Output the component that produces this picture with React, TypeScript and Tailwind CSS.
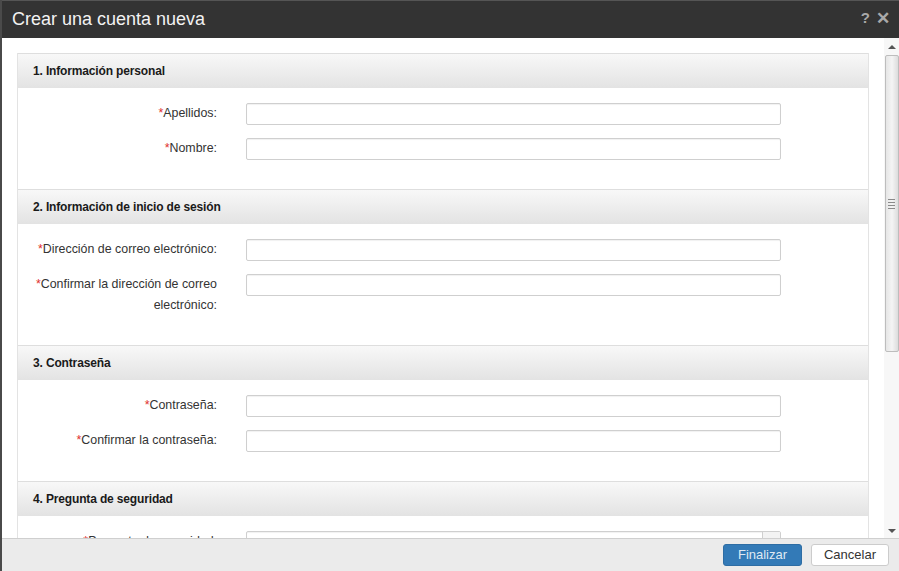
import React from "react";

type Field = { label: string; select?: boolean };
type Section = { title: string; fields: Field[] };

const sections: Section[] = [
  {
    title: "1. Información personal",
    fields: [{ label: "Apellidos:" }, { label: "Nombre:" }],
  },
  {
    title: "2. Información de inicio de sesión",
    fields: [
      { label: "Dirección de correo electrónico:" },
      { label: "Confirmar la dirección de correo electrónico:" },
    ],
  },
  {
    title: "3. Contraseña",
    fields: [{ label: "Contraseña:" }, { label: "Confirmar la contraseña:" }],
  },
  {
    title: "4. Pregunta de seguridad",
    fields: [{ label: "Pregunta de seguridad:", select: true }, { label: "Respuesta:" }],
  },
];

function FormRow({ field }: { field: Field }) {
  return (
    <div className="flex items-start gap-[29px]">
      <label className="w-[199px] shrink-0 pl-[14px] text-right text-[12.4px] leading-[21px] text-[#333]">
        <span className="text-[#e0322f]">*</span>
        {field.label}
      </label>
      <div className="relative h-[22px] w-[535px] rounded-[2px] border border-[#cfcfcf] bg-white shadow-[inset_0_1px_1px_rgba(0,0,0,0.06)]">
        {field.select && (
          <div className="absolute right-0 top-0 h-[20px] w-[18px] border-l border-[#cfcfcf] bg-[#f3f3f3]" />
        )}
      </div>
    </div>
  );
}

function Scrollbar() {
  return (
    <div className="flex w-[15px] shrink-0 flex-col items-center bg-[#f7f7f7]">
      <div className="flex h-[17px] items-center justify-center">
        <div className="h-0 w-0 border-x-[4px] border-b-[4px] border-x-transparent border-b-[#555]" />
      </div>
      <div className="flex h-[297px] w-[14px] items-center justify-center rounded-[2px] border border-[#bdbdbd] bg-gradient-to-r from-[#e6e6e6] via-[#f4f4f4] to-[#dcdcdc]">
        <div className="flex flex-col gap-[2px]">
          <div className="h-px w-[7px] bg-[#8a8a8a]" />
          <div className="h-px w-[7px] bg-[#8a8a8a]" />
          <div className="h-px w-[7px] bg-[#8a8a8a]" />
          <div className="h-px w-[7px] bg-[#8a8a8a]" />
        </div>
      </div>
      <div className="flex-1" />
      <div className="flex h-[14px] items-center justify-center">
        <div className="h-0 w-0 border-x-[4px] border-t-[4px] border-x-transparent border-t-[#555]" />
      </div>
    </div>
  );
}

export default function App() {
  return (
    <div
      className="flex h-[571px] w-[899px] flex-col overflow-hidden border-l-2 border-[#4a4a4a] bg-[#333]"
      style={{ fontFamily: '"Liberation Sans", Arial, sans-serif' }}
    >
      {/* Title bar */}
      <div className="flex h-[38px] shrink-0 items-center justify-between border-t border-[#555] bg-[#333] pl-[10px] pr-[9px]">
        <h1 className="text-[18px] text-[#f2f2f2]">Crear una cuenta nueva</h1>
        <div className="flex items-center gap-[6px] pb-[2px] font-bold text-[#a9a9a9]">
          <span className="text-[15px]">?</span>
          <span className="text-[17px] leading-none">✕</span>
        </div>
      </div>

      {/* Body */}
      <div className="flex min-h-0 flex-1 bg-white">
        <div className="min-h-0 flex-1 overflow-hidden px-[15px] pt-[15px]">
          <div className="border-x border-[#e3e3e3]">
            {sections.map((s) => (
              <div key={s.title}>
                <div className="flex h-[35px] items-center border-t border-[#dedede] bg-gradient-to-b from-[#f8f8f8] to-[#e3e3e3] pl-[15px] text-[12px] font-bold tracking-[-0.15px] text-[#1a1a1a]">
                  {s.title}
                </div>
                <div className="flex flex-col gap-[13px] pb-[29px] pt-[15px]">
                  {s.fields.map((f) => (
                    <FormRow key={f.label} field={f} />
                  ))}
                </div>
              </div>
            ))}
          </div>
        </div>
        <Scrollbar />
      </div>

      {/* Footer */}
      <div className="flex h-[33px] shrink-0 items-center justify-end gap-[9px] border-t border-[#cfcfcf] bg-[#ebebeb] pr-[10px]">
        <button className="h-[22px] w-[79px] rounded-[3px] border border-[#2e6da4] bg-[#337ab7] text-[13px] text-[#dfe9f3]">
          Finalizar
        </button>
        <button className="h-[22px] w-[78px] rounded-[3px] border border-[#cccccc] bg-white text-[13px] text-[#333]">
          Cancelar
        </button>
      </div>
    </div>
  );
}
